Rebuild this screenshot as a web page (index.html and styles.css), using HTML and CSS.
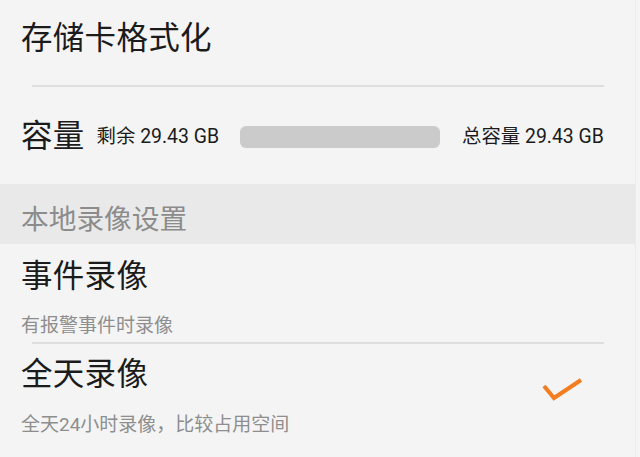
FILE: index.html
```html
<!DOCTYPE html>
<html lang="zh-CN">
<head>
	<meta charset="UTF-8">
	<meta name="viewport" content="width=device-width, initial-scale=1.0">
	<link rel="stylesheet" href="styles.css">
	<title>存储卡设置</title>
</head>
<body>
	<div class="page">
		<div class="item item-format">
			<div class="item-title">存储卡格式化</div>
		</div>
		<div class="divider"></div>

		<div class="item item-capacity">
			<div class="item-title">容量</div>
			<div class="cap-free">剩余 29.43 GB</div>
			<div class="cap-bar"><div class="cap-used" style="width: 0%"></div></div>
			<div class="cap-total">总容量 29.43 GB</div>
		</div>

		<div class="section-head">本地录像设置</div>

		<div class="item item-option">
			<div class="option-text">
				<div class="item-title">事件录像</div>
				<div class="item-sub">有报警事件时录像</div>
			</div>
		</div>
		<div class="divider"></div>

		<div class="item item-option item-last">
			<div class="option-text">
				<div class="item-title">全天录像</div>
				<div class="item-sub">全天24小时录像，比较占用空间</div>
			</div>
			<svg class="check" width="42" height="26" viewBox="0 0 42 26" aria-hidden="true">
				<polyline points="2,9 12,21 39,3" fill="none" stroke="#f37d1f" stroke-width="4" stroke-linecap="butt" stroke-linejoin="miter"/>
			</svg>
		</div>
	</div>
</body>
</html>
```

FILE: styles.css
```css
* {
  margin: 0;
  padding: 0;
  box-sizing: border-box;
}
html, body {
  height: 100%;
}
body {
  background: #f4f4f4;
  color: #1b1b1b;
  font-family: Roboto, "Noto Sans CJK SC", sans-serif;
  overflow: hidden;
}
.page {
  height: 100%;
  margin-right: 4px;
  border-right: 1px solid #ebebeb;
}
.item {
  display: flex;
  align-items: center;
  padding-left: 21px;
}
.item-title {
  font-size: 31.5px;
  line-height: 36px;
  letter-spacing: 0.3px;
}
.item-format {
  height: 85px;
  padding-bottom: 8px;
}
.divider {
  height: 2px;
  margin: 0 31px 0 32px;
  background: #dedede;
}
.item-capacity {
  height: 97px;
  padding-top: 3px;
}
.cap-free, .cap-total {
  font-size: 19.4px;
  line-height: 24px;
  white-space: nowrap;
}
.cap-free {
  margin-left: 12px;
}
.cap-bar {
  width: 200px;
  height: 22px;
  margin-left: 21px;
  border-radius: 6px;
  background: #cbcbcb;
  overflow: hidden;
}
.cap-used {
  height: 100%;
  background: #f37d1f;
}
.cap-total {
  margin-left: 22px;
}
.section-head {
  height: 60px;
  padding: 20px 0 0 21px;
  background: #e9e9e9;
  color: #8c8c8c;
  font-size: 27.7px;
  line-height: 32px;
}
.item-option {
  justify-content: space-between;
  align-items: flex-start;
}
.option-text {
  padding-top: 15px;
}
.item-sub {
  margin-top: 20px;
  color: #8e8e8e;
  font-size: 19px;
  line-height: 22px;
  padding-bottom: 5px;
}
.item-last .option-text {
  padding-top: 13px;
}
.item-last .item-sub {
  margin-top: 21px;
}
.check {
  margin: 33px 51px 0 0;
}
```
